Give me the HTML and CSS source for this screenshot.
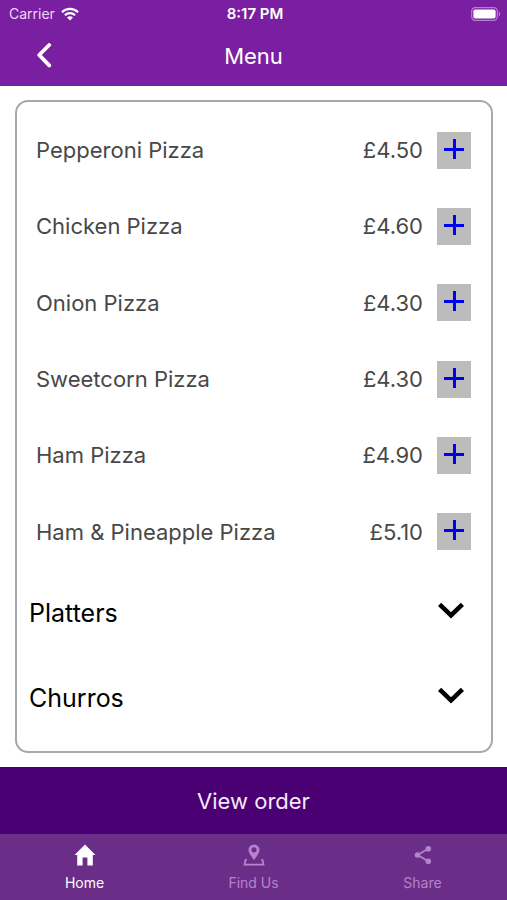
FILE: index.html
```
<!DOCTYPE html>
<html lang="en">
<head>
  <meta charset="UTF-8" />
  <meta name="viewport" content="width=device-width, initial-scale=1.0"/>
  <title>Menu</title>
  <link rel="stylesheet" href="styles.css">
</head>
<body>
  <header class="header">
    <div class="status-bar">
      <div class="carrier">
        <span>Carrier</span>
        <svg class="wifi" viewBox="0 0 18 14" aria-hidden="true">
          <path d="M1 5.2a11.4 11.4 0 0 1 16 0M3.9 8.2a7.3 7.3 0 0 1 10.2 0" fill="none" stroke="#fff" stroke-width="2.3"/>
          <path d="M9 13.6L6 10.6a4.3 4.3 0 0 1 6 0z" fill="#fff"/>
        </svg>
      </div>
      <span class="clock">8:17 PM</span>
      <svg class="battery" viewBox="0 0 30 14" aria-hidden="true">
        <rect x="0.7" y="0.7" width="25.6" height="12.6" rx="3.6" fill="none" stroke="#b57fd0" stroke-width="1.2"/>
        <rect x="2.4" y="2.4" width="22.2" height="9.2" rx="1.8" fill="#fff"/>
        <path d="M27.8 4.6a2.7 2.7 0 0 1 0 4.8z" fill="#b57fd0"/>
      </svg>
    </div>
    <div class="nav-bar">
      <button class="back-btn" aria-label="Back">
        <svg viewBox="0 0 16 26" aria-hidden="true">
          <path d="M13.2 2L3.2 12l10 10.4" fill="none" stroke="#fff" stroke-width="3.8" stroke-linecap="round" stroke-linejoin="round"/>
        </svg>
      </button>
      <h1>Menu</h1>
    </div>
  </header>

  <main class="content">
    <div class="card">
      <ul class="items">
        <li class="item">
          <span class="name">Pepperoni Pizza</span>
          <span class="price">£4.50</span>
          <button class="add-btn" aria-label="Add Pepperoni Pizza"></button>
        </li>
        <li class="item">
          <span class="name">Chicken Pizza</span>
          <span class="price">£4.60</span>
          <button class="add-btn" aria-label="Add Chicken Pizza"></button>
        </li>
        <li class="item">
          <span class="name">Onion Pizza</span>
          <span class="price">£4.30</span>
          <button class="add-btn" aria-label="Add Onion Pizza"></button>
        </li>
        <li class="item">
          <span class="name">Sweetcorn Pizza</span>
          <span class="price">£4.30</span>
          <button class="add-btn" aria-label="Add Sweetcorn Pizza"></button>
        </li>
        <li class="item">
          <span class="name">Ham Pizza</span>
          <span class="price">£4.90</span>
          <button class="add-btn" aria-label="Add Ham Pizza"></button>
        </li>
        <li class="item">
          <span class="name">Ham &amp; Pineapple Pizza</span>
          <span class="price">£5.10</span>
          <button class="add-btn" aria-label="Add Ham &amp; Pineapple Pizza"></button>
        </li>
      </ul>

      <button class="category">
        <span>Platters</span>
        <svg viewBox="0 0 26 22" aria-hidden="true">
          <path d="M1.6 2.4L13 13.4L24.4 2.4" fill="none" stroke="#000" stroke-width="4.6"/>
        </svg>
      </button>
      <button class="category">
        <span>Churros</span>
        <svg viewBox="0 0 26 22" aria-hidden="true">
          <path d="M1.6 2.4L13 13.4L24.4 2.4" fill="none" stroke="#000" stroke-width="4.6"/>
        </svg>
      </button>
    </div>
  </main>

  <button class="order-btn">View order</button>

  <nav class="tabs">
    <a href="#home" class="tab active">
      <svg viewBox="0 0 22 22" aria-hidden="true">
        <path d="M11 0.5L21.4 11h-2.6v10.5h-5.4v-8H8.6v8H3.2V11H0.6z" fill="currentColor"/>
      </svg>
      <span>Home</span>
    </a>
    <a href="#find" class="tab">
      <svg viewBox="0 0 22 22" aria-hidden="true">
        <path fill-rule="evenodd" d="M11 0.4a5.5 5.5 0 0 0-5.5 5.5c0 3.6 3.6 6.6 5.5 10.4c1.9-3.8 5.5-6.8 5.5-10.4A5.5 5.5 0 0 0 11 0.4zM11 3.2a2.6 2.6 0 1 1 0 5.2a2.6 2.6 0 0 1 0-5.2z" fill="currentColor"/>
        <path d="M3.8 15.8H2.6L1.5 20.6h19l-1.1-4.8h-1.2" fill="none" stroke="currentColor" stroke-width="1.8"/>
      </svg>
      <span>Find Us</span>
    </a>
    <a href="#share" class="tab">
      <svg viewBox="0 0 22 22" aria-hidden="true">
        <path d="M16.3 4.8L5.5 11l10.8 6.2" fill="none" stroke="currentColor" stroke-width="1.8"/>
        <circle cx="16.3" cy="4.8" r="2.8" fill="currentColor"/>
        <circle cx="5.5" cy="11" r="2.8" fill="currentColor"/>
        <circle cx="16.3" cy="17.2" r="2.8" fill="currentColor"/>
      </svg>
      <span>Share</span>
    </a>
  </nav>
</body>
</html>
```
FILE: styles.css
```
* {
  box-sizing: border-box;
}

body {
  margin: 0;
  min-height: 100vh;
  display: flex;
  flex-direction: column;
  background: white;
  font-family: Inter, "Liberation Sans", sans-serif;
}

button {
  font-family: inherit;
  border: none;
  padding: 0;
  cursor: pointer;
}

.header {
  background: #7b1fa2;
  color: white;
}

.status-bar,
.nav-bar {
  display: grid;
  grid-template-columns: 1fr auto 1fr;
  align-items: center;
}

.status-bar {
  height: 27px;
  padding: 0 6px 0 9px;
  font-size: 14px;
}

.carrier {
  display: flex;
  align-items: center;
  gap: 6px;
  color: #ecd9f3;
}

.wifi {
  width: 18px;
  height: 14px;
}

.clock {
  font-size: 15px;
  font-weight: 600;
}

.battery {
  justify-self: end;
  width: 30px;
  height: 14px;
}

.nav-bar {
  height: 59px;
  padding: 0 36px 2px;
}

.back-btn {
  width: 16px;
  height: 26px;
  background: none;
}

.back-btn svg {
  display: block;
}

h1 {
  margin: 0;
  font-size: 22px;
  font-weight: 400;
}

.content {
  flex: 1;
  display: flex;
  padding: 14px 14px 14px 15px;
}

.card {
  flex: 1;
  display: flex;
  flex-direction: column;
  padding: 10px 0 11px;
  border: 2px solid #a8a8a8;
  border-radius: 13px;
}

.items {
  flex: 1;
  display: flex;
  flex-direction: column;
  list-style: none;
  margin: 0;
  padding: 0 20px 0 19px;
}

.item {
  flex: 1;
  min-height: 60px;
  display: flex;
  align-items: center;
  color: #484848;
  font-size: 22px;
}

.name {
  flex: 1;
}

.add-btn {
  width: 34px;
  height: 37px;
  margin-left: 14px;
  /* the plus sign is two blue bars */
  background:
    linear-gradient(#0000f0, #0000f0) 7px 16px / 20px 3px no-repeat,
    linear-gradient(#0000f0, #0000f0) 16px 7px / 3px 20px no-repeat,
    #bcbcbc;
}

.category {
  display: flex;
  align-items: center;
  justify-content: space-between;
  height: 85px;
  padding: 0 27px 0 12px;
  background: none;
  color: black;
  font-size: 25px;
}

.category svg {
  width: 26px;
  height: 22px;
}

.order-btn {
  height: 67px;
  background: #4a0072;
  color: #f6e9fb;
  font-size: 22px;
}

.tabs {
  display: flex;
  height: 66px;
  background: #6a2e88;
}

.tab {
  flex: 1;
  display: flex;
  flex-direction: column;
  align-items: center;
  gap: 8px;
  padding-top: 10px;
  color: #b583cc;
  font-size: 14px;
  line-height: 18px;
  text-decoration: none;
}

.tab svg {
  width: 22px;
  height: 22px;
}

.tab.active {
  color: white;
}
```
